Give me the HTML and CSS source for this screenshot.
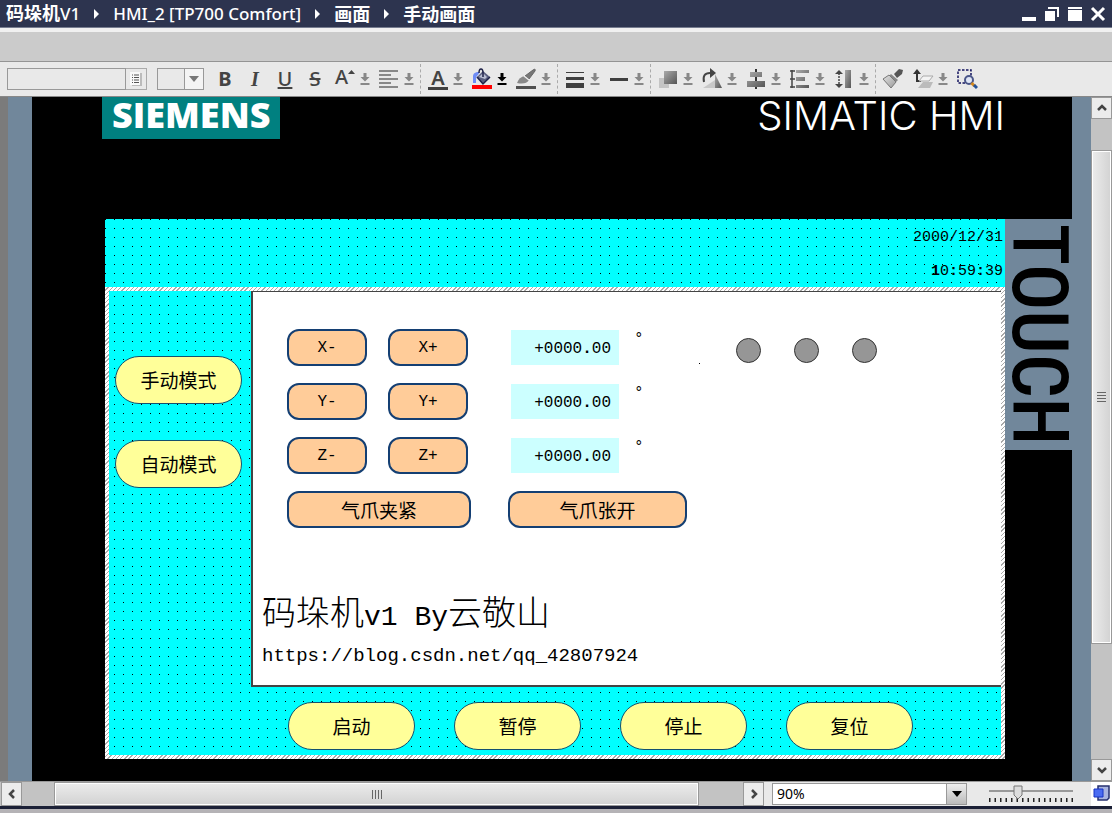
FILE: index.html
```html
<!DOCTYPE html>
<html lang="zh-CN">
<head>
<meta charset="utf-8">
<title>手动画面</title>
<link rel="stylesheet" href="styles.css">
</head>
<body>
<svg class="defs" aria-hidden="true">
  <symbol id="drop" viewBox="0 0 10 14"><path d="M3.500 1h3v4h3L5 9.500.5 5h3zM.5 11h9v2h-9z" fill="currentColor"/></symbol>
  <linearGradient id="metal" x1="0" y1="0" x2="1" y2="1"><stop offset="0" stop-color="#aaa"/><stop offset="1" stop-color="#555"/></linearGradient>
  <linearGradient id="pale" x1="0" y1="0" x2="1" y2="1"><stop offset="0" stop-color="#e4e4e4"/><stop offset="1" stop-color="#999"/></linearGradient>
</svg>

<header class="titlebar">
  <nav class="crumbs" aria-label="路径">
    <span><b>码垛机</b>V1</span><i class="arrow"></i>
    <span>HMI_2 [TP700 Comfort]</span><i class="arrow"></i>
    <b>画面</b><i class="arrow"></i>
    <b>手动画面</b>
  </nav>
  <div class="window-buttons">
    <button aria-label="最小化"><svg width="16" height="16"><path d="M1 11h14v4H1z" fill="#fff"/></svg></button>
    <button aria-label="还原"><svg width="16" height="16"><path d="M1 5h10v10H1z" fill="#fff"/><path d="M4 2h10v9" fill="none" stroke="#fff" stroke-width="2"/></svg></button>
    <button aria-label="最大化"><svg width="16" height="16"><path d="M1 1h14v2H1zM1 4h14v11H1z" fill="#fff"/></svg></button>
    <button aria-label="关闭"><svg width="16" height="16"><path d="M2 2l12 12M14 2L2 14" stroke="#fff" stroke-width="3"/></svg></button>
  </div>
</header>
<div class="band"></div>

<div class="toolbar" role="toolbar" aria-label="格式">
  <div class="font-box">
    <input type="text" aria-label="字体">
    <button aria-label="字体列表"><svg width="14" height="16"><path d="M1 1h10v13H1z" fill="#fafafa"/><path d="M11 2h2v13H3v-1h8z" fill="#bbb"/><path d="M3 4h1M3 6.500h1M3 9h1M3 11.500h1M5 4h5M5 6.500h5M5 9h5M5 11.500h5" stroke="#555"/></svg></button>
  </div>
  <div class="size-box">
    <select aria-label="字号"><option></option></select>
    <svg width="10" height="6"><path d="M0 0h10L5 6z" fill="#777"/></svg>
  </div>
  <button class="tool bold">B</button>
  <button class="tool italic">I</button>
  <button class="tool under">U</button>
  <button class="tool strike">S</button>
  <div class="pair">
    <button class="tool grow" aria-label="字号增减">A<svg width="7" height="4"><path d="M0 4l3.500-4L7 4z" fill="#444"/></svg></button>
    <button class="drop" aria-label="更多"><svg width="10" height="14"><use href="#drop"/></svg></button>
  </div>
  <div class="pair">
    <button class="tool" aria-label="对齐"><svg width="20" height="20"><path d="M0 2h19M0 6h12M0 10h19M0 14h12M0 18h19" stroke="#888" stroke-width="2"/></svg></button>
    <button class="drop" aria-label="更多"><svg width="10" height="14"><use href="#drop"/></svg></button>
  </div>
  <i class="sep"></i>
  <div class="pair">
    <button class="tool colour">A</button>
    <button class="drop" aria-label="更多"><svg width="10" height="14"><use href="#drop"/></svg></button>
  </div>
  <div class="pair">
    <button class="tool" aria-label="背景色"><svg width="22" height="22"><path d="M1 17h20v4H1z" fill="red"/><path d="M2 15V8q0-3 4-4h3L7 7q-2 1-2 5v3z" fill="#6e8cf5"/><path d="M6 9l6-6 7 6-7 7z" fill="#5a5f80"/><path d="M8 9l4-4 4 4-2 2z" fill="#b9bed2"/><path d="M8 5q0-4 2-4t2 4v4M6 9l6 7 7-7" fill="none" stroke="#1d2147" stroke-width="1.500"/></svg></button>
    <button class="drop active" aria-label="更多"><svg width="10" height="14"><use href="#drop"/></svg></button>
  </div>
  <div class="pair">
    <button class="tool" aria-label="边框颜色"><svg width="22" height="22"><path d="M1 18h20v3H1z" fill="#505050"/><path d="M10 8l8-6q3-2 2 1l-6 8z" fill="#777" stroke="#666"/><path d="M2 15q2-6 8-7l4 4q-3 5-12 3z" fill="#888"/><path d="M9 8l5 4" stroke="#eee" stroke-width="1.500"/></svg></button>
    <button class="drop" aria-label="更多"><svg width="10" height="14"><use href="#drop"/></svg></button>
  </div>
  <i class="sep"></i>
  <div class="pair">
    <button class="tool" aria-label="线宽"><svg width="20" height="20"><path d="M1 3h18v1H1zM1 8h18v3H1zM1 14h18v5H1z" fill="#404040"/></svg></button>
    <button class="drop" aria-label="更多"><svg width="10" height="14"><use href="#drop"/></svg></button>
  </div>
  <div class="pair">
    <button class="tool" aria-label="线型"><svg width="20" height="20"><path d="M1 9h18v3H1z" fill="#404040"/></svg></button>
    <button class="drop" aria-label="更多"><svg width="10" height="14"><use href="#drop"/></svg></button>
  </div>
  <i class="sep"></i>
  <div class="pair">
    <button class="tool" aria-label="层次"><svg width="20" height="20"><path d="M1 9h10v10H1z" fill="#c4c4c4"/><path d="M6 2h13v13H6z" fill="url(#metal)"/></svg></button>
    <button class="drop" aria-label="更多"><svg width="10" height="14"><use href="#drop"/></svg></button>
  </div>
  <div class="pair">
    <button class="tool" aria-label="旋转"><svg width="22" height="22"><path d="M3 14Q1 5 9 5h2" fill="none" stroke="#444" stroke-width="2"/><path d="M9 0l6 5-6 5z" fill="#444"/><path d="M2 20l12-8v8z" fill="#c8c8c8"/><path d="M14 6l7 14h-7z" fill="url(#metal)"/></svg></button>
    <button class="drop" aria-label="更多"><svg width="10" height="14"><use href="#drop"/></svg></button>
  </div>
  <div class="pair">
    <button class="tool" aria-label="居中"><svg width="20" height="20"><path d="M10 0v20" stroke="#333" stroke-width="2"/><path d="M4 3h12v5H4zM1 12h18v6H1z" fill="url(#metal)"/></svg></button>
    <button class="drop" aria-label="更多"><svg width="10" height="14"><use href="#drop"/></svg></button>
  </div>
  <div class="pair">
    <button class="tool" aria-label="分布"><svg width="20" height="20"><path d="M2 1v18M0 2h5M0 10h5M0 18h5" stroke="#444" stroke-width="1.500" fill="none"/><path d="M6 1h13v3H6zM6 8h9v4H6zM6 16h13v3H6z" fill="url(#metal)"/></svg></button>
    <button class="drop" aria-label="更多"><svg width="10" height="14"><use href="#drop"/></svg></button>
  </div>
  <div class="pair">
    <button class="tool" aria-label="等高"><svg width="20" height="20"><path d="M5 4v12" stroke="#444" stroke-width="1.500" stroke-dasharray="2 1"/><path d="M1 5l4-4 4 4zM1 15l4 4 4-4z" fill="#444"/><path d="M11 1h6v18h-6z" fill="url(#metal)"/></svg></button>
    <button class="drop" aria-label="更多"><svg width="10" height="14"><use href="#drop"/></svg></button>
  </div>
  <i class="sep"></i>
  <button class="tool" aria-label="格式刷"><svg width="22" height="22"><path d="M12 6l5-5 4 1-1 4-5 4z" fill="#555"/><path d="M9 6l7 6-2 2-7-6z" fill="#888"/><path d="M1 11l6-4 7 7-5 6z" fill="url(#pale)" stroke="#777"/></svg></button>
  <div class="pair">
    <button class="tool" aria-label="移动层"><svg width="22" height="22"><path d="M5 5v8h4" fill="none" stroke="#333" stroke-width="2"/><path d="M1 6l4-5 4 5z" fill="#333"/><path d="M11 8h10l-4 5H7z" fill="#f3f3f3" stroke="#aaa"/><path d="M11 14h10l-3 6H6z" fill="#bbb"/></svg></button>
    <button class="drop" aria-label="更多"><svg width="10" height="14"><use href="#drop"/></svg></button>
  </div>
  <button class="tool" aria-label="缩放选区"><svg width="22" height="22"><path d="M2 2h13v13H2z" fill="none" stroke="#12125e" stroke-width="1.500" stroke-dasharray="2.500 1.500"/><circle cx="13" cy="12" r="4" fill="#dfe6f5" stroke="#4a5688" stroke-width="2"/><path d="M15.500 15l3 3" stroke="#d68a1c" stroke-width="3"/><path d="M18 17l3 3" stroke="#24529a" stroke-width="3"/></svg></button>
</div>

<main class="workspace">
  <section class="device">
    <div class="device-head">
      <span class="brand">SIEMENS</span>
      <span class="product">SIMATIC HMI</span>
    </div>
    <div class="device-row">
      <div class="screen">
        <div class="clock">
          <time>2000/12/31</time>
          <time><b>1</b>0<b>:</b>59<b>:</b>39</time>
        </div>
        <div class="template">
          <nav class="modes">
            <button class="pill">手动模式</button>
            <button class="pill">自动模式</button>
          </nav>
          <div class="page">
            <div class="axis">
              <button class="key">X-</button><button class="key">X+</button>
              <output>+0000<b>.</b>00</output><span class="degree">°</span>
              <i class="speck"></i>
              <div class="lamps"><i></i><i></i><i></i></div>
            </div>
            <div class="axis">
              <button class="key">Y-</button><button class="key">Y+</button>
              <output>+0000<b>.</b>00</output><span class="degree">°</span>
            </div>
            <div class="axis">
              <button class="key">Z-</button><button class="key">Z+</button>
              <output>+0000<b>.</b>00</output><span class="degree">°</span>
            </div>
            <div class="gripper">
              <button class="key wide">气爪夹紧</button>
              <button class="key wide">气爪张开</button>
            </div>
            <div class="credits">
              <h1>码垛机<span>v1 By</span>云敬山</h1>
              <p>https://blog.csdn.net/qq_42807924</p>
            </div>
          </div>
          <div class="commands">
            <button class="pill">启动</button>
            <button class="pill">暂停</button>
            <button class="pill">停止</button>
            <button class="pill">复位</button>
          </div>
        </div>
      </div>
      <div class="touch"><span>TOUCH</span></div>
    </div>
  </section>
  <div class="vscroll">
    <button aria-label="向上"><svg width="10" height="10"><path d="M1 7l4-4 4 4" fill="none" stroke="#444" stroke-width="2.500"/></svg></button>
    <div class="vtrack"><div class="vthumb"><i class="grip"></i></div></div>
    <button aria-label="向下"><svg width="10" height="10"><path d="M1 3l4 4 4-4" fill="none" stroke="#444" stroke-width="2.500"/></svg></button>
  </div>
</main>

<footer class="bottom">
  <div class="hscroll">
    <button aria-label="向左"><svg width="10" height="10"><path d="M7 1L3 5l4 4" fill="none" stroke="#444" stroke-width="2.500"/></svg></button>
    <div class="htrack"><div class="hthumb"><i class="grip upright"></i></div></div>
    <button aria-label="向右"><svg width="10" height="10"><path d="M3 1l4 4-4 4" fill="none" stroke="#444" stroke-width="2.500"/></svg></button>
  </div>
  <div class="zoom">
    <select aria-label="缩放"><option>90%</option></select>
    <span><svg width="10" height="6"><path d="M0 0h10L5 6z" fill="#000"/></svg></span>
  </div>
  <div class="slider">
    <svg viewBox="0 0 84 22"><path d="M0 8h84" stroke="#999" stroke-width="2"/><path d="M0 17h84" stroke="#222" stroke-width="4" stroke-dasharray="1.500 4"/><path d="M25 3h8v9l-4 4-4-4z" fill="#ddd" stroke="#777"/></svg>
    <input type="range" min="0" max="100" value="33" aria-label="缩放比例">
  </div>
  <button class="overview" aria-label="总览"><svg width="18" height="18"><path d="M5 1h11v12l-2 2H5z" fill="#a9b4e0" stroke="#26306f" stroke-width="1.500"/><path d="M1 4h9v8H1z" fill="#4a6cf2" stroke="#1733c4"/></svg></button>
</footer>
<div class="edge"></div>
</body>
</html>
```
FILE: styles.css
```css
* { box-sizing: border-box; }

body {
  margin: 0;
  min-height: 100vh;
  display: flex;
  flex-direction: column;
  overflow: hidden;
  background: #e9e9e9;
  font-family: "Noto Sans", "Noto Sans CJK SC", sans-serif;
}

button {
  margin: 0;
  padding: 0;
  border: 0;
  background: none;
  color: inherit;
  font: inherit;
}

svg { display: block; }
.defs { position: absolute; width: 0; height: 0; }

/* Title bar */
.titlebar {
  display: flex;
  justify-content: space-between;
  align-items: center;
  height: 28px;
  padding: 0 6px;
  border-bottom: 1px solid #777d90;
  background: #2d344f;
  color: #fff;
}
.crumbs {
  display: flex;
  align-items: center;
  font-size: 17px;
  font-weight: 500;
  line-height: 24px;
  white-space: nowrap;
}
.crumbs b { font-size: 18px; font-weight: 700; }
.arrow {
  margin: 0 14px;
  border: 5px solid transparent;
  border-left-color: #fff;
  border-right-width: 0;
}
.window-buttons { display: flex; gap: 7px; }

.band {
  height: 34px;
  border-top: 4px solid #f0f0f0;
  border-bottom: 1px solid #949494;
  background: #cbcbcb;
}

/* Toolbar */
.toolbar {
  display: flex;
  align-items: center;
  gap: 4px;
  height: 35px;
  padding: 0 7px;
  border-bottom: 1px solid #888;
  background: #e9e9e9;
  color: #444;
}
.font-box { display: flex; margin-right: 6px; }
.font-box input {
  width: 119px;
  height: 22px;
  border: 1px solid #999;
  background: #e9e9e9;
}
.font-box button {
  display: grid;
  place-items: center;
  width: 21px;
  height: 22px;
  border: 1px solid #aaa;
  border-left: 0;
}
.size-box { display: grid; align-items: center; margin-right: 4px; }
.size-box > * { grid-area: 1 / 1; }
.size-box select {
  appearance: none;
  width: 47px;
  height: 22px;
  border: 1px solid #999;
  border-radius: 0;
  background: linear-gradient(to right, #e9e9e9 26px, #999 26px 27px, #f4f4f4 27px);
}
.size-box svg { justify-self: end; margin-right: 5px; pointer-events: none; }
.tool {
  display: flex;
  justify-content: center;
  align-items: center;
  width: 26px;
  height: 26px;
  font-size: 20px;
  font-weight: 500;
  line-height: 22px;
}
.bold { font-weight: 700; }
.italic { font-family: "Liberation Serif", serif; font-style: italic; font-weight: 700; }
.under { text-decoration: underline; }
.strike { text-decoration: line-through; }
.grow { align-items: flex-start; font-size: 20px; }
.grow svg { margin-top: 4px; }
.colour {
  width: 20px;
  height: 22px;
  margin: 0 3px;
  border-bottom: 3px solid #404040;
  font-weight: 600;
  line-height: 19px;
}
.pair { display: flex; align-items: center; }
.drop { display: grid; place-items: center; width: 14px; height: 22px; color: #888; }
.drop.active { color: #000; }
.sep { height: 30px; border-left: 1px dashed #aaa; }

/* Workspace */
.workspace { display: flex; flex: 1; min-height: 0; }
.device {
  flex: 1;
  display: flex;
  flex-direction: column;
  min-width: 0;
  padding-left: 102px;
  border-right: 19px solid #71879b;
  background: linear-gradient(to right, #7b7b7b 8px, #71879b 8px 32px, #000 32px);
}
.device-head {
  display: flex;
  justify-content: space-between;
  align-items: flex-start;
  height: 122px;
  padding-right: 67px;
}
.brand {
  height: 42px;
  padding: 0 10px;
  background: #008080;
  color: #fff;
  font: 800 36px/36px "Open Sans", sans-serif;
}
.product { color: #fff; font: 300 40px/37px Inter, sans-serif; }
.device-row { display: flex; margin-left: 3px; }
.screen { flex: 1; }

.clock,
.template {
  background-color: #0ff;
  background-image:
    linear-gradient(to bottom, transparent 1px, #0ff 1px),
    linear-gradient(to right, #000 1px, #0ff 1px);
  background-size: 9px 9px;
}
.clock {
  display: flex;
  flex-direction: column;
  align-items: flex-end;
  gap: 10px;
  height: 68px;
  padding: 7px 2px;
  color: #000;
  font: 15px/24px "Liberation Mono", monospace;
}
.template {
  display: grid;
  grid-template-columns: 142px 1fr;
  grid-template-rows: 396px 68px;
  border: 4px solid;
  border-image: repeating-linear-gradient(135deg, #fff 0 2px, #aaa 2px 3px) 4;
  background-position: 5px 5px;
  background-clip: padding-box;
}
.modes {
  display: flex;
  flex-direction: column;
  align-items: flex-start;
  gap: 36px;
  padding: 65px 0 0 6px;
}
.pill {
  width: 127px;
  height: 48px;
  border: 1px solid #14506e;
  border-radius: 24px;
  background: #ff9;
  color: #000;
  font: 19px/24px "Noto Sans CJK SC", sans-serif;
}
.commands {
  grid-column: 1 / -1;
  display: flex;
  gap: 39px;
  padding: 15px 0 0 179px;
}

.page {
  display: flex;
  flex-direction: column;
  gap: 17px;
  padding: 37px 0 0 34px;
  border: 2px solid #444;
  border-width: 1px 0 2px 2px;
  background: #fff;
  color: #000;
}
.axis, .gripper { display: flex; height: 37px; align-items: center; }
.key {
  width: 80px;
  height: 37px;
  margin-right: 21px;
  border: 2px solid #143f73;
  border-radius: 12px;
  background: #fc9;
  font: 16px/24px "Liberation Mono", monospace;
}
.axis output {
  width: 108px;
  height: 35px;
  margin-left: 22px;
  padding: 2px 8px 0 0;
  background: #cff;
  font: 16px/35px "Liberation Mono", monospace;
  text-align: right;
}
.degree {
  align-self: flex-start;
  width: 24px;
  margin-left: 15px;
  font: 16px/20px "Liberation Mono", monospace;
}
.speck { align-self: flex-end; width: 1px; height: 1px; margin: 0 36px 2px 41px; background: #000; }
.lamps { display: flex; gap: 33px; padding-top: 5px; }
.lamps i {
  width: 25px;
  height: 25px;
  border: 1px solid #333;
  border-radius: 50%;
  background: #969696;
}
.gripper { gap: 16px; }
.key.wide { width: 184px; font: 19px/24px "Noto Sans CJK SC", sans-serif; }
.key.wide + .key.wide { width: 179px; }

.credits { margin: 42px 0 0 -25px; }
.credits h1 {
  margin: 0;
  font: 300 34px/48px "Noto Sans CJK SC", sans-serif;
}
.credits h1 span { font: 28px/40px "Liberation Mono", monospace; }
.credits p {
  margin: 6px 0 0;
  font: 19px/24px "Liberation Mono", monospace;
}

.touch {
  width: 67px;
  height: 231px;
  background: #71879b;
  color: #000;
  font: 500 77px/67px "Roboto Condensed", "Liberation Sans Narrow", Roboto, sans-serif;
  writing-mode: vertical-rl;
  text-align: center;
}

/* Scroll bars */
.vscroll {
  display: flex;
  flex-direction: column;
  width: 21px;
  background: #c3c3c3;
}
.vscroll button,
.hscroll button {
  display: grid;
  place-items: center;
  width: 21px;
  height: 22px;
  border: 1px solid #999;
  background: #ececec;
}
.vtrack { flex: 1; padding: 31px 0 115px; }
.vthumb,
.hthumb {
  display: grid;
  place-items: center;
  height: 100%;
  border: 1px solid #999;
  box-shadow: inset 0 0 0 1px #fff;
  background: linear-gradient(to right, #ececec, #d2d2d2);
}
.hthumb { background: linear-gradient(to bottom, #ececec, #d2d2d2); }
.grip {
  width: 9px;
  height: 10px;
  background: repeating-linear-gradient(to bottom, #666 0 1px, #ddd 1px 3px);
}
.grip.upright { width: 10px; height: 9px; background: repeating-linear-gradient(to right, #666 0 1px, #ddd 1px 3px); }

.bottom {
  display: flex;
  align-items: center;
  height: 25px;
  border-top: 1px solid #999;
  background: #e9e9e9;
}
.hscroll { flex: 1; display: flex; height: 24px; padding-left: 1px; background: #c3c3c3; }
.hscroll button { height: 24px; }
.htrack { flex: 1; padding: 0 44px 0 32px; }
.zoom { display: grid; width: 195px; margin: 0 22px 0 8px; }
.zoom > * { grid-area: 1 / 1; }
.zoom select {
  appearance: none;
  height: 22px;
  padding: 0 4px;
  border: 1px solid #999;
  border-radius: 0;
  background: #fff;
  color: #000;
  font: 14px/18px "Noto Sans", sans-serif;
}
.zoom span {
  justify-self: end;
  display: grid;
  place-items: center;
  width: 21px;
  border: 1px solid #999;
  background: linear-gradient(#eee, #bbb);
  pointer-events: none;
}
.slider { display: grid; width: 84px; }
.slider > * { grid-area: 1 / 1; }
.slider input { width: 100%; margin: 0; opacity: 0; }
.overview {
  display: grid;
  place-items: center;
  width: 21px;
  height: 24px;
  margin-left: 18px;
  background: #fff;
}
.edge { height: 7px; border-top: 3px solid #1b2036; background: #b5b3b6; }
```
